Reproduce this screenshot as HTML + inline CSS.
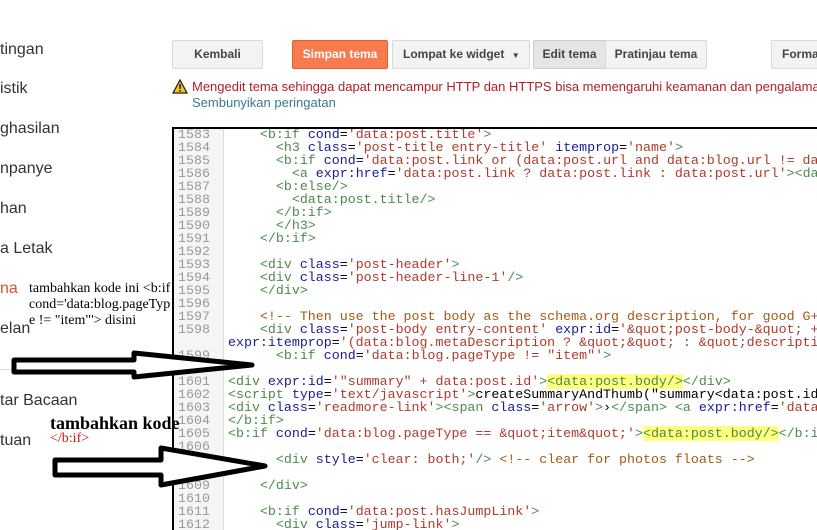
<!DOCTYPE html>
<html style="overflow:hidden;height:530px"><head><meta charset="utf-8">
<style>
*{margin:0;padding:0;box-sizing:border-box}
body{width:817px;height:530px;overflow:hidden;background:#fff;position:relative;font-family:"Liberation Sans",Arial,sans-serif}
.nav{position:absolute;left:0;font-size:16px;color:#333}
.btn{position:absolute;top:40px;height:29px;border:1px solid #d9d9d9;background:#f3f3f3;border-radius:2px;font-size:12px;font-weight:bold;color:#444;text-align:center;line-height:27px}
.ed{position:absolute;left:172px;top:127px;width:700px;height:410px;border:2px solid #000;border-bottom:none;background:#fff;overflow:hidden}
.gut{position:absolute;left:0;top:0;width:50px;height:100%;background:#f5f5f5;border-right:1px solid #ddd}
pre{position:absolute;top:-1px;font-family:"Liberation Mono","Courier New",monospace;font-size:13.3px;line-height:13px;white-space:pre}
.ln{left:4px;color:#999}
.cd{left:54px;color:#000}
.t{color:#4a8a4a}.a{color:#1a1a9a}.s{color:#b03a2a}.c{color:#a05a1a}.h{background:#ffff80}
.ann{position:absolute;font-family:"Liberation Serif","Times New Roman",serif}
</style></head><body>
<div class="nav" style="top:41px">tingan</div>
<div class="nav" style="top:80px">istik</div>
<div class="nav" style="top:120px">ghasilan</div>
<div class="nav" style="top:160px">npanye</div>
<div class="nav" style="top:200px">han</div>
<div class="nav" style="top:240px">a Letak</div>
<div class="nav" style="top:280px;color:#e0502a">na</div>
<div class="nav" style="top:320px">elan</div>
<div style="position:absolute;left:0;top:369px;width:160px;height:1px;background:#ddd"></div>
<div class="nav" style="top:392px">tar Bacaan</div>
<div class="nav" style="top:432px">tuan</div>

<div class="btn" style="left:172px;width:91px">Kembali</div>
<div class="btn" style="left:292px;width:96px;background:#f87a4f;border-color:#e0602f;color:#fff">Simpan tema</div>
<div class="btn" style="left:392px;width:138px;text-align:left;padding-left:10px">Lompat ke widget <span style="font-size:8px;margin-left:4px">▼</span></div>
<div class="btn" style="left:533px;width:73px;background:#e5e5e5;border-color:#ccc">Edit tema</div>
<div class="btn" style="left:605px;width:102px">Pratinjau tema</div>
<div class="btn" style="left:771px;width:60px;text-align:left;padding-left:10px">Forma</div>

<svg style="position:absolute;left:172px;top:79px" width="16" height="15"><polygon points="8,1 15,14 1,14" fill="#f6c700" stroke="#222" stroke-width="1.3"/><rect x="7.3" y="5" width="1.6" height="5" fill="#222"/><rect x="7.3" y="11" width="1.6" height="1.6" fill="#222"/></svg>
<div style="position:absolute;left:192px;top:79px;font-size:13px;color:#b0202a;white-space:nowrap">Mengedit tema sehingga dapat mencampur HTTP dan HTTPS bisa memengaruhi keamanan dan pengalaman</div>
<div style="position:absolute;left:192px;top:95px;font-size:13px;color:#3a7a8a">Sembunyikan peringatan</div>

<div class="ed"><div class="gut"></div>
<pre class="ln">1583
1584
1585
1586
1587
1588
1589
1590
1591
1592
1593
1594
1595
1596
1597
1598

1599
1600
1601
1602
1603
1604
1605
1606
1607
1608
1609
1610
1611
1612</pre>
<pre class="cd">    <span class="t">&lt;b:if</span> <span class="a">cond</span>=<span class="s">'data:post.title'</span><span class="t">&gt;</span>
      <span class="t">&lt;h3</span> <span class="a">class</span>=<span class="s">'post-title entry-title'</span> <span class="a">itemprop</span>=<span class="s">'name'</span><span class="t">&gt;</span>
      <span class="t">&lt;b:if</span> <span class="a">cond</span>=<span class="s">'data:post.link or (data:post.url and data:blog.url != data</span>
        <span class="t">&lt;a</span> <span class="a">expr:href</span>=<span class="s">'data:post.link ? data:post.link : data:post.url'</span><span class="t">&gt;&lt;da</span>
      <span class="t">&lt;b:else/&gt;</span>
        <span class="t">&lt;data:post.title/&gt;</span>
      <span class="t">&lt;/b:if&gt;</span>
      <span class="t">&lt;/h3&gt;</span>
    <span class="t">&lt;/b:if&gt;</span>

    <span class="t">&lt;div</span> <span class="a">class</span>=<span class="s">'post-header'</span><span class="t">&gt;</span>
    <span class="t">&lt;div</span> <span class="a">class</span>=<span class="s">'post-header-line-1'</span><span class="t">/&gt;</span>
    <span class="t">&lt;/div&gt;</span>

    <span class="c">&lt;!-- Then use the post body as the schema.org description, for good G+</span>
    <span class="t">&lt;div</span> <span class="a">class</span>=<span class="s">'post-body entry-content'</span> <span class="a">expr:id</span>=<span class="s">'&amp;quot;post-body-&amp;quot; +</span>
<span class="a">expr:itemprop</span>=<span class="s">'(data:blog.metaDescription ? &amp;quot;&amp;quot; : &amp;quot;descripti</span>
      <span class="t">&lt;b:if</span> <span class="a">cond</span>=<span class="s">'data:blog.pageType != "item"'</span><span class="t">&gt;</span>

<span class="t">&lt;div</span> <span class="a">expr:id</span>=<span class="s">'"summary" + data:post.id'</span><span class="t">&gt;</span><span class="t h">&lt;data:post.body/&gt;</span><span class="t">&lt;/div&gt;</span>
<span class="t">&lt;script</span> <span class="a">type</span>=<span class="s">'text/javascript'</span><span class="t">&gt;</span>createSummaryAndThumb("summary&lt;data:post.id
<span class="t">&lt;div</span> <span class="a">class</span>=<span class="s">'readmore-link'</span><span class="t">&gt;&lt;span</span> <span class="a">class</span>=<span class="s">'arrow'</span><span class="t">&gt;</span>›<span class="t">&lt;/span&gt;</span> <span class="t">&lt;a</span> <span class="a">expr:href</span>=<span class="s">'data</span>
<span class="t">&lt;/b:if&gt;</span>
<span class="t">&lt;b:if</span> <span class="a">cond</span>=<span class="s">'data:blog.pageType == &amp;quot;item&amp;quot;'</span><span class="t">&gt;</span><span class="t h">&lt;data:post.body/&gt;</span><span class="t">&lt;/b:if&gt;</span>

      <span class="t">&lt;div</span> <span class="a">style</span>=<span class="s">'clear: both;'</span><span class="t">/&gt;</span> <span class="c">&lt;!-- clear for photos floats --&gt;</span>

    <span class="t">&lt;/div&gt;</span>

    <span class="t">&lt;b:if</span> <span class="a">cond</span>=<span class="s">'data:post.hasJumpLink'</span><span class="t">&gt;</span>
      <span class="t">&lt;div</span> <span class="a">class</span>=<span class="s">'jump-link'</span><span class="t">&gt;</span></pre>
</div>

<div class="ann" style="left:29px;top:281px;font-size:14px;line-height:16px;color:#000;width:146px">tambahkan kode ini &lt;b:if cond='data:blog.pageTyp e != "item"'&gt; disini</div>
<div class="ann" style="left:50px;top:413px;font-size:18px;font-weight:bold;color:#000">tambahkan kode</div>
<div class="ann" style="left:50px;top:431px;font-size:14px;color:#d01010">&lt;/b:if&gt;</div>

<svg style="position:absolute;left:0;top:0" width="817" height="530">
<polygon points="14,360 134,360 134,353 252,365 134,377 134,372 14,372" fill="#fff" stroke="#000" stroke-width="5" stroke-linejoin="round"/>
<polygon points="55,460 161,460 161,448 265,466 161,485 161,475 55,475" fill="#fff" stroke="#000" stroke-width="5" stroke-linejoin="round"/>
</svg>
</body></html>
